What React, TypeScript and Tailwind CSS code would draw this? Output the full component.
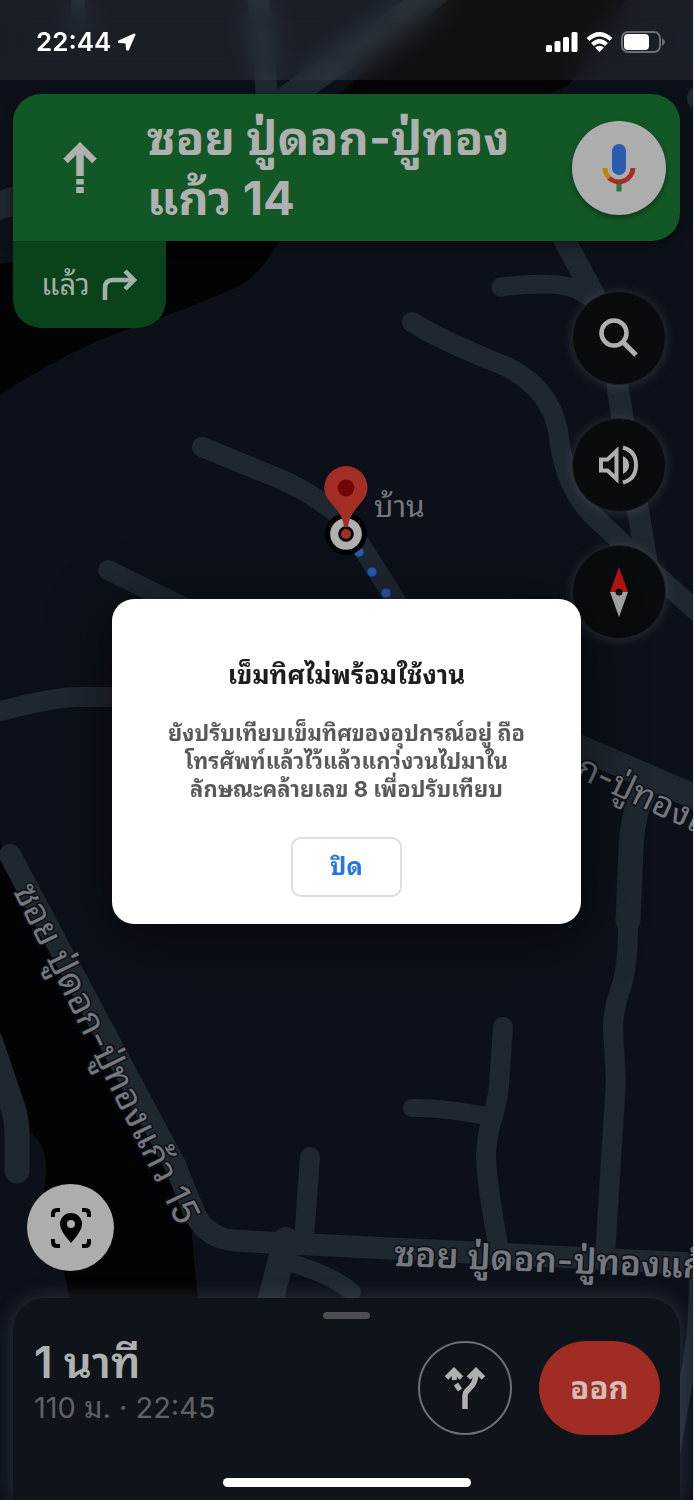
import type { ReactNode } from "react";

const roads: { d: string; w: number }[] = [
  { d: "M256 -20 Q264 40 268 120", w: 22 },
  { d: "M455 -20 L355 50 L270 110", w: 26 },
  { d: "M78 -20 V30", w: 14 },
  { d: "M-10 209 L60 185", w: 28 },
  { d: "M202 447 L268 474 Q310 490 345 520 L405 615", w: 20 },
  { d: "M108 570 L200 615", w: 20 },
  { d: "M-10 714 Q50 697 80 697 H125", w: 20 },
  { d: "M412 322 Q440 340 500 364 Q548 384 558 430 Q564 492 600 522 L640 560 L704 618", w: 20 },
  { d: "M501 287 Q560 280 578 290 L606 306", w: 19 },
  { d: "M560 232 L598 302 Q612 330 618 390 L638 510 L648 570", w: 22 },
  { d: "M570 743 L704 801", w: 25 },
  { d: "M643 795 Q632 815 631 850 L628 920", w: 25 },
  { d: "M628 925 Q628 970 620 990 Q613 1010 613 1030 L616 1080 L605 1255", w: 20 },
  { d: "M503 1027 L499 1085 Q497 1105 491 1122 Q486 1140 486 1160 Q488 1190 498 1245", w: 20 },
  { d: "M412 1108 Q440 1107 492 1117", w: 18 },
  { d: "M310 1157 L304 1240", w: 20 },
  { d: "M10 855 L175 1165 L194 1212 Q206 1240 240 1241 L704 1264", w: 22 },
  { d: "M286 1240 L268 1310", w: 26 },
  { d: "M280 1260 Q330 1273 352 1292", w: 18 },
  { d: "M-10 1040 L12 1105 Q17 1118 17 1135 V1171", w: 25 },
  { d: "M696 1275 Q696 1340 686 1380 L674 1450", w: 14 },
];

function MapCanvas() {
  return (
    <svg
      className="absolute inset-0 h-full w-full"
      viewBox="0 0 693 1500"
      preserveAspectRatio="xMidYMin slice"
      role="img"
      aria-label="แผนที่"
    >
      <rect x="-600" width="1900" height="1500" fill="#0c1119" />
      <path
        d="M0 264 Q180 240 355 80 L470 -20 H640 L570 84 L290 225 L278 243 Q258 278 235 288 Q180 312 120 332 Q60 355 0 395Z"
        fill="#020305"
      />
      <path
        d="M0 842 L190 1210 Q193 1250 198 1300 H70 Q64 1270 44 1190 Q50 1155 38 1140 L28 1130 L0 1060Z"
        fill="#020305"
      />
      <g fill="none" stroke="#1f272f" strokeLinecap="round" strokeLinejoin="round">
        {roads.map((r) => (
          <path key={r.d} d={r.d} strokeWidth={r.w} />
        ))}
      </g>
      <circle cx="699" cy="98" r="12" fill="#1f272f" />

      <g fill="#2a5aac" stroke="#17305f" strokeWidth="1">
        <circle cx="359" cy="552" r="5" />
        <circle cx="372" cy="572" r="5" />
        <circle cx="386" cy="593" r="5" />
      </g>
      <circle cx="346" cy="534" r="21" fill="#000" />
      <circle cx="346" cy="534" r="11.8" fill="none" stroke="#b0b0b0" strokeWidth="8" />
      <path
        d="M346 466 A21.7 21.7 0 0 1 367.500 488 C367 503 350.500 507 348 527 H344 C341.500 507 324.500 503 324.300 488 A21.700 21.700 0 0 1 346 466Z"
        fill="#a22e25"
      />
      <circle cx="346" cy="488" r="8.400" fill="#710807" />
      <circle cx="346" cy="534" r="5" fill="#a22e25" />

      <g
        fill="#75787d"
        stroke="#0c1119"
        strokeWidth="3"
        paintOrder="stroke"
        strokeLinejoin="round"
      >
        <text x="374" y="517" fontSize="30">
          บ้าน
        </text>
        <text fontSize="36" transform="translate(13 891) rotate(63.800)">
          ซอย ปู่ดอก-ปู่ทองแก้ว 15
        </text>
        <text fontSize="35" fontWeight="600" transform="translate(394 1266) rotate(2.300)">
          ซอย ปู่ดอก-ปู่ทองแก้ว 14
        </text>
        <text fontSize="35" transform="translate(574 776) rotate(25)">
          ก-ปู่ทองแก้ว 14
        </text>
      </g>
    </svg>
  );
}

function StatusBar() {
  return (
    <header className="relative flex h-20 items-center justify-between bg-white/6 pt-1 pr-7 pl-9 text-white backdrop-blur-md">
      <div className="flex items-center gap-1.5">
        <time className="text-[26px] leading-8 font-semibold">22:44</time>
        <svg width="19" height="19" viewBox="0 0 19 19" aria-hidden="true">
          <path
            d="M17.500 1.500 L11 16.500 L10 16.500 L9.500 9.500 L2 9 L2 8.500Z"
            fill="#fff"
            stroke="#fff"
            strokeWidth="2"
            strokeLinejoin="round"
          />
        </svg>
      </div>
      <div className="flex items-center gap-2">
        <svg width="32" height="20" viewBox="0 0 32 20" fill="#fff" aria-hidden="true">
          <rect y="13" width="6" height="7" rx="1.500" />
          <rect x="8.500" y="9" width="6" height="11" rx="1.500" />
          <rect x="17" y="5" width="6" height="15" rx="1.500" />
          <rect x="25.500" width="6" height="20" rx="1.500" />
        </svg>
        <svg width="27" height="20" viewBox="0 0 27 20" aria-hidden="true">
          <g fill="none" stroke="#fff" strokeWidth="4.200">
            <path d="M2 7.500 Q13.500 -3 25 7.500" />
            <path d="M6.500 12.500 Q13.500 6 20.500 12.500" />
          </g>
          <path d="M13.500 20 L9 15.500 Q13.500 12 18 15.500Z" fill="#fff" />
        </svg>
        <svg width="44" height="22" viewBox="0 0 44 22" aria-hidden="true">
          <rect x="1" y="1" width="38" height="20" rx="6" fill="none" stroke="#6b7078" strokeWidth="2" />
          <rect x="3" y="3" width="25" height="16" rx="4" fill="#fff" />
          <path d="M41 7 Q44 9 44 11 T41 15Z" fill="#6b7078" />
        </svg>
      </div>
    </header>
  );
}

function RoundButton({ label, children }: { label: string; children: ReactNode }) {
  return (
    <button
      type="button"
      aria-label={label}
      className="flex size-[94px] items-center justify-center rounded-full border border-[#1c2024] bg-[#090c0e] shadow-[0_1px_12px_rgba(160,170,180,0.22)]"
    >
      {children}
    </button>
  );
}

function Directions() {
  return (
    <section className="relative mx-[13px] mt-3.5">
      <div className="flex min-h-[147px] items-center rounded-[28px] rounded-bl-none bg-[#125726] pr-3.5 shadow-[0_4px_12px_rgba(0,0,0,0.4)]">
        <div className="flex w-[134px] shrink-0 justify-center">
          <svg width="36" height="52" viewBox="0 0 36 52" aria-hidden="true">
            <path d="M3.500 19 L18 4.500 L32.500 19" fill="none" stroke="#b0b0b0" strokeWidth="6.500" />
            <path d="M18 4 V34 M18 37 V42.500 M18 45 V51" stroke="#b0b0b0" strokeWidth="7.500" />
          </svg>
        </div>
        <h1 className="min-w-0 flex-1 text-[47px] leading-[60px] font-bold text-[#b0b0b0]">
          ซอย ปู่ดอก-ปู่ทอง
          <br />
          แก้ว 14
        </h1>
        <button
          type="button"
          aria-label="ค้นหาด้วยเสียง"
          className="flex size-[94px] shrink-0 items-center justify-center rounded-full bg-[#adadad] shadow-[0_3px_5px_rgba(0,0,0,0.35)]"
        >
          <svg width="34" height="48" viewBox="0 0 34 48" aria-hidden="true">
            <rect x="10" y="0" width="14" height="31" rx="7" fill="#2b5cb0" />
            <path d="M3 24 A14 14 0 0 0 7.500 34" fill="none" stroke="#b88a08" strokeWidth="5" />
            <path d="M7 34 A14.300 14.300 0 0 0 31 24" fill="none" stroke="#a52f27" strokeWidth="5" />
            <rect x="14.500" y="40" width="5" height="7.500" fill="#25763b" />
          </svg>
        </button>
      </div>
    </section>
  );
}

function NextTurn() {
  return (
    <div className="ml-[13px] flex h-[87px] w-[153px] items-center justify-center gap-3 rounded-b-[28px] bg-[#0a421c] text-[29px] leading-9 text-[#a5b1a7]">
      แล้ว
      <svg width="36" height="32" viewBox="0 0 36 32" fill="none" stroke="#a5b1a7" strokeWidth="4.500" aria-hidden="true">
        <path d="M3 31 V19 Q3 11 11 11 H32 M23 2 L32 11 L23 20" />
      </svg>
    </div>
  );
}

function MapButtons() {
  return (
    <nav aria-label="เครื่องมือแผนที่" className="mt-[50px] mr-[27px] flex flex-col gap-[33px]">
      <RoundButton label="ค้นหา">
        <svg width="40" height="40" viewBox="0 0 40 40" fill="none" stroke="#aeb0b1" aria-hidden="true">
          <circle cx="15" cy="15" r="12.500" strokeWidth="4.500" />
          <path d="M24 24 L37 37" strokeWidth="5" />
        </svg>
      </RoundButton>
      <RoundButton label="เสียง">
        <svg width="42" height="40" viewBox="0 0 42 40" aria-hidden="true">
          <path
            d="M3 14.500 H9.500 L18.500 6 V34 L9.500 25.500 H3Z"
            fill="none"
            stroke="#aeb0b1"
            strokeWidth="4"
          />
          <path d="M25 11 Q31 14 31 20 T25 29Z" fill="#aeb0b1" />
          <path d="M25 2.500 Q38 6 38 20 T25 37.500" fill="none" stroke="#aeb0b1" strokeWidth="4" />
        </svg>
      </RoundButton>
      <RoundButton label="เข็มทิศ">
        <svg width="20" height="50" viewBox="0 0 20 50" aria-hidden="true">
          <path d="M10 0 L19 25 H1Z" fill="#b3140f" />
          <path d="M10 50 L1 25 H19Z" fill="#a3a3a3" />
          <circle cx="10" cy="25" r="3.500" fill="#090c0e" />
        </svg>
      </RoundButton>
    </nav>
  );
}

function TripSheet() {
  return (
    <footer className="relative mx-[13px] flex h-[202px] flex-col items-center rounded-t-[32px] bg-[#0f141a] shadow-[0_0_20px_rgba(150,160,175,0.25)]">
      <div className="mt-3.5 h-[7px] w-[47px] shrink-0 rounded-full bg-[#4c4e51]" />
      <div className="mt-[17px] flex w-full items-center justify-between pr-5 pl-[21px]">
        <div className="pb-3">
          <p className="text-[44px] leading-[52px] font-semibold text-[#aeb0b1]">1 นาที</p>
          <p className="text-[29px] leading-10 text-[#5f6367]">110 ม. · 22:45</p>
        </div>
        <div className="flex gap-[27px]">
          <button
            type="button"
            aria-label="เส้นทางอื่น"
            className="flex size-[94px] items-center justify-center rounded-full border-2 border-[#6d7073]"
          >
            <svg width="42" height="44" viewBox="0 0 42 44" fill="none" stroke="#aeb0b1" aria-hidden="true">
              <path d="M21 43 V30 Q21 26 25 23 Q32 17 32 6" strokeWidth="5.500" />
              <path d="M2.500 12 L10 4.500 L17.500 12 M24.500 12 L32 4.500 L39.500 12" strokeWidth="5" />
              <path d="M10 5 L10.500 14 M12 18 L16 24" strokeWidth="5" />
            </svg>
          </button>
          <button
            type="button"
            className="h-[94px] w-[121px] rounded-full bg-[#a02c24] text-[31px] leading-10 font-bold text-[#d3bdb5]"
          >
            ออก
          </button>
        </div>
      </div>
      <div className="mt-auto mb-[13px] h-[9px] w-[248px] shrink-0 rounded-full bg-white" />
    </footer>
  );
}

function CompassDialog() {
  return (
    <div className="absolute inset-0 flex items-center justify-center px-28 pt-[23px]">
      <div
        role="dialog"
        aria-modal="true"
        aria-labelledby="compass-title"
        className="flex w-full max-w-[469px] flex-col items-center rounded-[22px] bg-white px-8 pt-14 pb-[27px] text-center shadow-[0_12px_60px_rgba(0,0,0,0.6)]"
      >
        <h2 id="compass-title" className="text-[26px] leading-10 font-bold whitespace-nowrap text-[#1d1d1f]">
          เข็มทิศไม่พร้อมใช้งาน
        </h2>
        <p className="mt-6 text-[22px] leading-7 font-bold whitespace-nowrap text-[#58595b]">
          ยังปรับเทียบเข็มทิศของอุปกรณ์อยู่ ถือ
          <br />
          โทรศัพท์แล้วไว้แล้วแกว่งวนไปมาใน
          <br />
          ลักษณะคล้ายเลข 8 เพื่อปรับเทียบ
        </p>
        <button
          type="button"
          className="mt-[34px] h-[60px] w-[111px] rounded-[10px] border-2 border-[#dedfe1] text-2xl leading-8 font-bold text-[#2374e8]"
        >
          ปิด
        </button>
      </div>
    </div>
  );
}

export default function App() {
  return (
    <main className="relative flex min-h-screen flex-col overflow-hidden border-r border-[#e8e9ea] bg-[#0c1119] font-['Inter','Noto_Sans_Thai_Looped','Loma','Noto_Sans_Thai','Noto_Sans',sans-serif]">
      <MapCanvas />
      <StatusBar />
      <Directions />
      <div className="relative flex items-start justify-between">
        <NextTurn />
        <MapButtons />
      </div>
      <div className="relative mt-auto mb-[27px] ml-[27px] flex">
        <button
          type="button"
          aria-label="ปรับเทียบด้วยกล้อง"
          className="flex size-[87px] items-center justify-center rounded-full bg-[#adadad]"
        >
          <svg width="42" height="42" viewBox="0 0 42 42" aria-hidden="true">
            <path
              d="M3 10 V7 Q3 3 7 3 H10 M32 3 H35 Q39 3 39 7 V10 M39 32 V35 Q39 39 35 39 H32 M10 39 H7 Q3 39 3 35 V32"
              fill="none"
              stroke="#000"
              strokeWidth="4"
            />
            <path
              fillRule="evenodd"
              d="M21 6 A11 11 0 0 1 32 17 Q32 24 21 36 Q10 24 10 17 A11 11 0 0 1 21 6Z M21 13 A4 4 0 1 0 21 21 A4 4 0 1 0 21 13Z"
            />
          </svg>
        </button>
      </div>
      <TripSheet />
      <CompassDialog />
    </main>
  );
}
